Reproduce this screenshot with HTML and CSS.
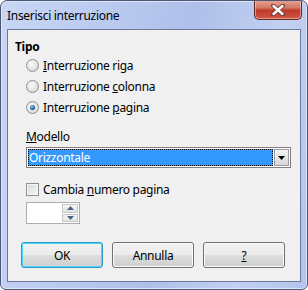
FILE: index.html
```html
<html lang="it">
<head>
  <meta charset="UTF-8" />
  <title>Inserisci interruzione</title>
  <link rel="stylesheet" href="styles.css">
</head>
<body>
  <div class="window">
    <div class="titlebar">
      <span class="title">Inserisci interruzione</span>
      <button class="close" aria-label="Chiudi">
        <svg width="16" height="12" viewBox="0 0 16 12">
          <path d="M3 1.5 L13 10.5 M13 1.5 L3 10.5" stroke="#6b3b3b" stroke-width="4" stroke-linecap="round" />
          <path d="M3.5 2 L12.5 10 M12.5 2 L3.5 10" stroke="#fff" stroke-width="2.4" stroke-linecap="round" />
        </svg>
      </button>
    </div>

    <div class="client">
      <div class="group-title">Tipo</div>

      <label class="radio-row">
        <span class="radio"></span>
        <span><u>I</u>nterruzione riga</span>
      </label>
      <label class="radio-row">
        <span class="radio"></span>
        <span>Interruzione <u>c</u>olonna</span>
      </label>
      <label class="radio-row">
        <span class="radio checked"></span>
        <span>Interruzione <u>p</u>agina</span>
      </label>

      <div class="field-label"><u>M</u>odello</div>
      <div class="select">
        <div class="select-value">Orizzontale</div>
        <div class="select-button">
          <svg width="7" height="4" viewBox="0 0 7 4"><path d="M0 0 H7 L3.5 4 Z" fill="#000" /></svg>
        </div>
      </div>

      <label class="check-row">
        <span class="checkbox"></span>
        <span>Cambia <u>n</u>umero pagina</span>
      </label>

      <div class="spin">
        <div class="spin-input"></div>
        <div class="spin-buttons">
          <div class="spin-btn">
            <svg width="7" height="4" viewBox="0 0 7 4"><path d="M0 4 H7 L3.5 0 Z" fill="#4d6185" /></svg>
          </div>
          <div class="spin-btn">
            <svg width="7" height="4" viewBox="0 0 7 4"><path d="M0 0 H7 L3.5 4 Z" fill="#4d6185" /></svg>
          </div>
        </div>
      </div>

      <div class="buttons">
        <button class="btn default">OK</button>
        <button class="btn">Annulla</button>
        <button class="btn"><u>?</u></button>
      </div>
    </div>
  </div>
</body>
</html>
```

FILE: styles.css
```css
body {
  margin: 0;
  font-family: "Noto Sans", "Open Sans", sans-serif;
  font-size: 12px;
  letter-spacing: -0.3px;
  color: #000;
  background: #fff;
}
.window {
  width: 308px;
  height: 290px;
  box-sizing: border-box;
  border: 1px solid #4a5775;
  border-radius: 7px 7px 6px 6px;
  background: linear-gradient(100deg, #c9d6f4 0%, #b8c8ef 35%, #aebfe9 55%, #c2d0f2 80%, #b3c3ec 100%);
  box-shadow: inset 0 0 0 1px #dde6fa;
  overflow: hidden;
}
.titlebar {
  height: 28px;
  display: flex;
  align-items: flex-start;
}
.title {
  padding: 6px 0 0 6px;
  font-size: 12px;
  color: #000;
}
.close {
  margin-left: auto;
  margin-right: 5px;
  margin-top: -1px;
  width: 48px;
  height: 20px;
  padding: 0;
  border: 1px solid #5f2a26;
  border-top: none;
  border-radius: 0 0 5px 5px;
  background: linear-gradient(#e8a593 0%, #d47867 40%, #c0392b 55%, #cf5a45 100%);
  box-shadow: inset 0 0 0 1px rgba(255, 220, 210, 0.5);
  display: flex;
  align-items: center;
  justify-content: center;
}
.client {
  margin: 0 6px;
  height: 253px;
  box-sizing: border-box;
  border: 1px solid #6b7a9a;
  background: #f0f0f0;
  padding: 0 0 0 7px;
}
.group-title {
  margin-top: 8px;
  line-height: 18px;
  font-weight: bold;
}
.radio-row,
.check-row {
  display: flex;
  align-items: center;
  gap: 4px;
  padding-left: 11px;
  height: 21px;
}
.radio-row:first-of-type {
  margin-top: -1px;
}
.radio {
  width: 11px;
  height: 11px;
  border-radius: 50%;
  border: 1px solid #8e8f8f;
  background: radial-gradient(circle at 40% 35%, #fafafa 0%, #e4e4e4 55%, #cfcfcf 100%);
  display: flex;
  align-items: center;
  justify-content: center;
}
.radio.checked::after {
  content: "";
  width: 5px;
  height: 5px;
  border-radius: 50%;
  background: radial-gradient(circle at 40% 35%, #8ec6f0 0%, #1d5c98 60%, #0d3a69 100%);
}
.field-label {
  margin-top: 10px;
  padding-left: 11px;
  line-height: 18px;
}
.select {
  margin: 1px 0 0 11px;
  width: 265px;
  height: 21px;
  box-sizing: border-box;
  border: 1px solid #7f7f7f;
  display: flex;
  background: #fff;
}
.select-value {
  flex: 1;
  margin: 1px;
  padding-left: 1px;
  background: #3399ff;
  color: #fff;
  outline: 1px dotted #000;
  outline-offset: -1px;
  line-height: 17px;
}
.select-button {
  width: 15px;
  margin: 1px 1px 1px 0;
  box-sizing: border-box;
  border: 1px solid #9b9b9b;
  background: linear-gradient(#f3f3f3 0%, #e6e6e6 50%, #d6d6d6 100%);
  display: flex;
  align-items: center;
  justify-content: center;
}
.check-row {
  margin-top: 11px;
  height: 20px;
}
.checkbox {
  width: 11px;
  height: 11px;
  border: 1px solid #8e8f8f;
  background: linear-gradient(135deg, #d6d6d6 0%, #ececec 60%, #f8f8f8 100%);
  box-shadow: inset 0 0 0 1px #f4f4f4;
}
.spin {
  margin: 3px 0 0 11px;
  width: 54px;
  height: 22px;
  box-sizing: border-box;
  border: 1px solid #abadb3;
  background: #fff;
  display: flex;
}
.spin-input {
  flex: 1;
}
.spin-buttons {
  width: 16px;
  margin: 1px 1px 1px 0;
  display: flex;
  flex-direction: column;
  gap: 1px;
}
.spin-btn {
  flex: 1;
  border: 1px solid #c5c5c5;
  background: linear-gradient(#f6f6f6, #e2e2e2);
  display: flex;
  align-items: center;
  justify-content: center;
}
.buttons {
  margin-top: 18px;
  padding-left: 6px;
  display: flex;
  gap: 9px;
}
.btn {
  width: 82px;
  height: 26px;
  padding: 0;
  font-family: inherit;
  font-size: 12px;
  letter-spacing: inherit;
  color: #000;
  border: 1px solid #707070;
  border-radius: 3px;
  background: linear-gradient(#f2f2f2 0%, #ebebeb 50%, #dddddd 51%, #cfcfcf 100%);
  box-shadow: inset 0 0 0 1px #fcfcfc;
}
.btn.default {
  border-color: #3399cc;
  box-shadow: inset 0 0 0 1px #48d8fb;
}
```
